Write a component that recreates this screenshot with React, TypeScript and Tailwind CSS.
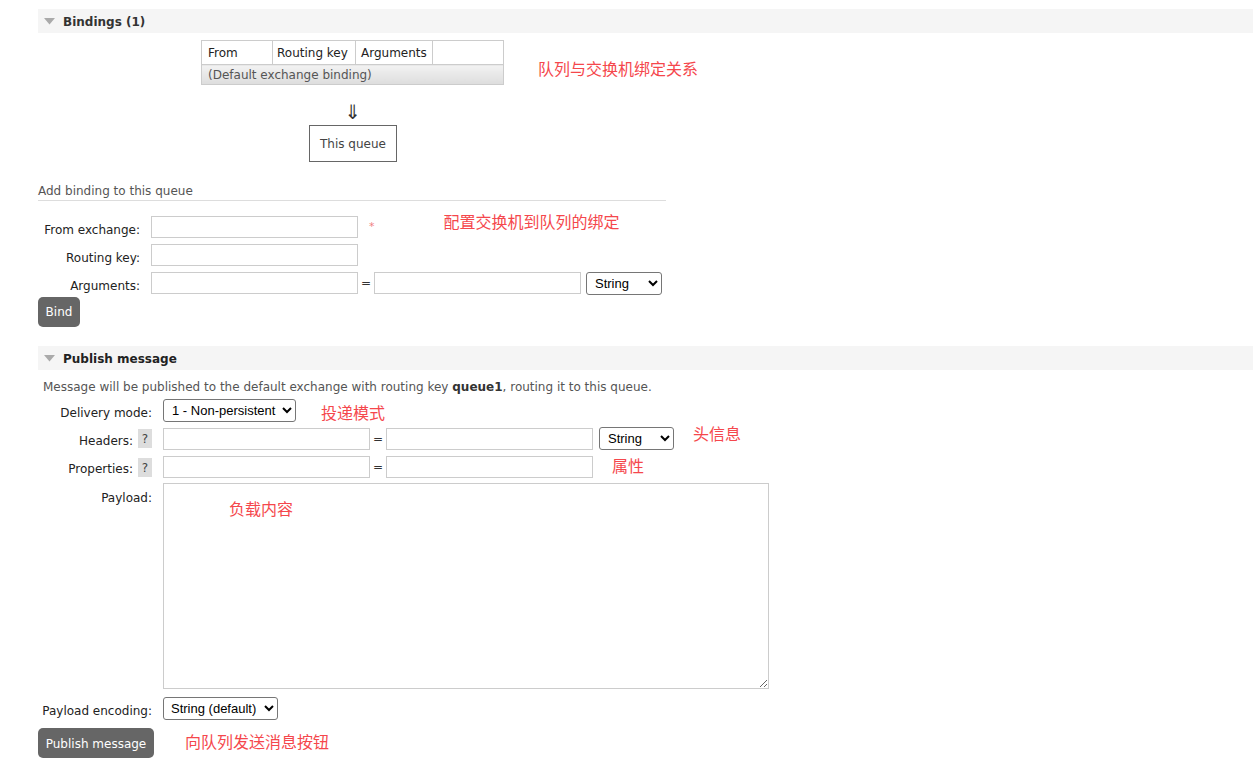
import React from "react";

function Tri() {
  return (
    <svg width="11" height="7" viewBox="0 0 11 7" className="ml-[6px] mr-[8px]">
      <polygon points="0,0 11,0 5.5,6.5" fill="#aaaaaa" />
    </svg>
  );
}

const red = "text-[#f5474c] font-['Noto_Sans_CJK_SC',sans-serif] text-[16px] leading-[24px] whitespace-nowrap";

function TextInput({ w = "w-[207px]" }: { w?: string }) {
  return <input type="text" className={`${w} h-[22px] border border-[#cccccc] bg-white px-1 outline-none`} />;
}

export default function App() {
  return (
    <div className="min-h-[769px] bg-white font-['DejaVu_Sans',sans-serif] text-[12px] leading-[16px] text-[#333] pl-[38px] pt-[9px]">
      {/* Bindings header */}
      <div className="h-[24px] bg-[#f5f5f5] flex items-center">
        <Tri />
        <span className="font-bold text-[#333] pt-[1px]">Bindings (1)</span>
      </div>

      {/* Table + annotation */}
      <div className="flex items-start mt-[7px]">
        <table className="ml-[163px] w-[302px] table-fixed border-collapse">
          <tbody>
            <tr className="h-[24px]">
              <td className="w-[71px] border border-[#cccccc] px-[6px] text-[#222]">From</td>
              <td className="w-[83px] border border-[#cccccc] px-[4px] text-[#222]">Routing key</td>
              <td className="w-[77px] border border-[#cccccc] px-[5px] text-[#222]">Arguments</td>
              <td className="w-[71px] border border-[#cccccc]"></td>
            </tr>
            <tr className="h-[20px]">
              <td colSpan={4} className="border border-[#cccccc] px-[6px] text-[#555] bg-linear-to-b from-[#f2f2f2] to-[#dddddd]">
                (Default exchange binding)
              </td>
            </tr>
          </tbody>
        </table>
        <span className={`${red} ml-[34px] mt-[16px]`}>队列与交换机绑定关系</span>
      </div>

      {/* Arrow + This queue */}
      <div className="ml-[271px] w-[88px] flex flex-col items-center">
        <div className="h-[40px] flex items-end pb-[3px] text-[20px] leading-[20px] text-[#333]">⇓</div>
        <div className="w-[88px] h-[37px] border border-[#666] flex items-center justify-center text-[#444]">This queue</div>
      </div>

      {/* Add binding */}
      <div className="mt-[21px] w-[628px] border-b border-[#dddddd] pb-[1px] text-[#555]">Add binding to this queue</div>

      <div className="mt-[15px] flex flex-col gap-[6px]">
        <div className="flex items-center h-[22px]">
          <label className="w-[102px] text-right pt-[5px] text-[#222] whitespace-nowrap">From exchange:</label>
          <div className="ml-[11px]"><TextInput /></div>
          <span className="ml-[11px] text-[#f08080] text-[11px]">*</span>
          <span className={`${red} ml-[69px] -translate-y-[6px]`}>配置交换机到队列的绑定</span>
        </div>
        <div className="flex items-center h-[22px]">
          <label className="w-[102px] text-right pt-[5px] text-[#222] whitespace-nowrap">Routing key:</label>
          <div className="ml-[11px]"><TextInput /></div>
        </div>
        <div className="flex items-center h-[22px]">
          <label className="w-[102px] text-right pt-[5px] text-[#222] whitespace-nowrap">Arguments:</label>
          <div className="ml-[11px]"><TextInput /></div>
          <span className="w-[16px] text-center text-[#333]">=</span>
          <TextInput />
          <select className="ml-[5px] w-[76px] h-[23px] border border-[#767676] rounded-[3px] bg-white font-['Liberation_Sans',sans-serif] text-[13px] text-black pl-[4px]">
            <option>String</option>
          </select>
        </div>
      </div>

      <button className="mt-[3px] w-[42px] h-[30px] bg-[#666666] rounded-[5px] text-white text-[12px]">Bind</button>

      {/* Publish header */}
      <div className="mt-[19px] h-[24px] bg-[#f5f5f5] flex items-center">
        <Tri />
        <span className="font-bold text-[#222] pt-[1px]">Publish message</span>
      </div>

      <div className="mt-[8px] pl-[5px] pt-[1px] text-[#555] whitespace-nowrap">
        Message will be published to the default exchange with routing key <b className="text-[#333]">queue1</b>, routing it to this queue.
      </div>

      <div className="pl-[5px] flex flex-col">
        {/* Delivery mode */}
        <div className="mt-[4px] flex items-center h-[23px]">
          <div className="w-[109px] text-right pt-[4px] text-[#222] whitespace-nowrap">Delivery mode:</div>
          <select className="ml-[11px] w-[133px] h-[23px] border border-[#767676] rounded-[3px] bg-white font-['Liberation_Sans',sans-serif] text-[13px] text-black pl-[4px]">
            <option>1 - Non-persistent</option>
          </select>
          <span className={`${red} ml-[25px] translate-y-[1px]`}>投递模式</span>
        </div>

        {/* Headers */}
        <div className="mt-[5px] flex items-center h-[23px]">
          <div className="w-[109px] flex justify-end items-center gap-[5px] text-[#222]">
            <span className="pt-[4px] whitespace-nowrap">Headers:</span>
            <span className="w-[14px] h-[19px] bg-[#dddddd] flex items-center justify-center text-[#444] pt-[1px]">?</span>
          </div>
          <div className="ml-[11px]"><TextInput /></div>
          <span className="w-[16px] text-center text-[#333]">=</span>
          <TextInput />
          <select className="ml-[6px] w-[75px] h-[23px] border border-[#767676] rounded-[3px] bg-white font-['Liberation_Sans',sans-serif] text-[13px] text-black pl-[4px]">
            <option>String</option>
          </select>
          <span className={`${red} ml-[19px] -translate-y-[6px]`}>头信息</span>
        </div>

        {/* Properties */}
        <div className="mt-[6px] flex items-center h-[22px]">
          <div className="w-[109px] flex justify-end items-center gap-[5px] text-[#222]">
            <span className="pt-[4px] whitespace-nowrap">Properties:</span>
            <span className="w-[14px] h-[19px] bg-[#dddddd] flex items-center justify-center text-[#444] pt-[1px]">?</span>
          </div>
          <div className="ml-[11px]"><TextInput /></div>
          <span className="w-[16px] text-center text-[#333]">=</span>
          <TextInput />
          <span className={`${red} ml-[19px] -translate-y-[2px]`}>属性</span>
        </div>

        {/* Payload */}
        <div className="mt-[5px] flex items-start">
          <div className="w-[109px] text-right pt-[7px] text-[#222]">Payload:</div>
          <div className="ml-[11px] relative">
            <textarea className="block w-[606px] h-[206px] border border-[#cccccc] bg-white outline-none"></textarea>
            <span className={`${red} absolute left-[66px] top-[13px]`}>负载内容</span>
          </div>
        </div>

        {/* Payload encoding */}
        <div className="mt-[8px] flex items-center h-[23px]">
          <div className="w-[109px] flex justify-end pt-[4px] text-[#222] whitespace-nowrap">Payload encoding:</div>
          <select className="ml-[11px] w-[115px] h-[23px] border border-[#767676] rounded-[3px] bg-white font-['Liberation_Sans',sans-serif] text-[13px] text-black pl-[3px]">
            <option>String (default)</option>
          </select>
        </div>
      </div>

      <div className="mt-[8px] flex items-center">
        <button className="w-[116px] h-[30px] bg-[#666666] rounded-[5px] text-white text-[12px] pt-[1px]">Publish message</button>
        <span className={`${red} ml-[31px] -translate-y-[2px]`}>向队列发送消息按钮</span>
      </div>
    </div>
  );
}
